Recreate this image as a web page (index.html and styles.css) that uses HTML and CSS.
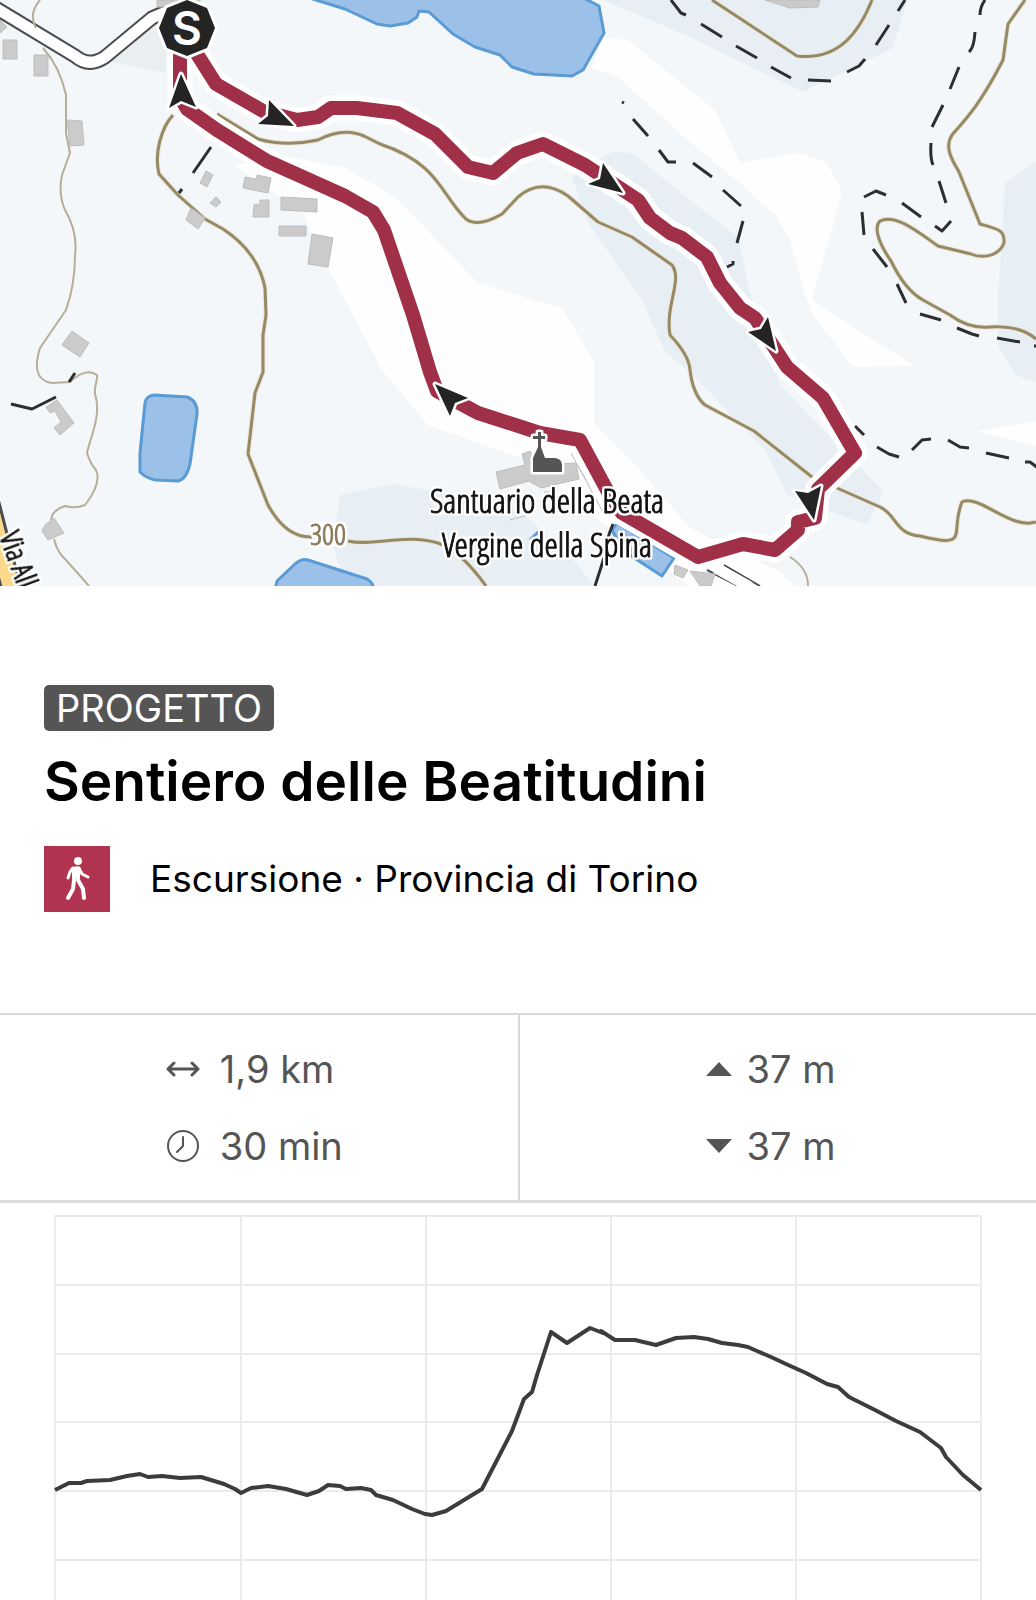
FILE: index.html
```html
<!DOCTYPE html>
<html lang="it">
<head>
<meta charset="utf-8">
<meta name="viewport" content="width=device-width, initial-scale=1">
<title>Sentiero delle Beatitudini</title>
<link rel="stylesheet" href="styles.css">
</head>
<body>
<main class="tour">
  <svg class="map" viewBox="0 0 1036 586" role="img" aria-label="Mappa del percorso">
    <!-- terrain -->
    <g class="land-white">
      <path d="M233 165 L290 157 L345 168 L395 197 L478 283 L562 308 L594 362 L594 423 L638 468 L690 528 L780 572 L795 586 L690 586 L610 530 L532 462 L428 425 L382 370 L345 300 L320 253 L303 213Z"/>
      <path d="M603 38 L628 40 L690 90 L715 110 L740 163 L800 153 L827 163 L842 192 L812 300 L873 340 L915 366 L853 367 L813 315 L805 295 L790 240 L777 217 L740 183 L690 142 L618 77 L592 68Z"/>
      <path d="M977 431 L1036 421 V446Z"/>
    </g>
    <g class="land-blue">
      <path d="M603 0 L690 37 L757 70 L803 92 L893 48 L907 0Z"/>
      <path d="M612 152 L632 153 L690 200 L738 237 L750 293 L780 385 L833 440 L884 492 L867 525 L787 495 L765 450 L690 372 L665 352 L642 300 L588 223 L572 177Z"/>
      <path d="M1036 161 L1005 183 L998 300 V345 L1015 375 L1036 382Z"/>
      <path d="M340 495 L392 484 L428 490 L518 508 L575 562 L595 586 H345 L333 545Z"/>
    </g>
    <path class="land-grey" d="M110 62 L166 73 V22 L150 20Z"/>

    <!-- water -->
    <g class="water">
      <path d="M303 -4 L345 9 L377 24 L390 26 L408 23 L417 17 L419 11 L429 12 L453 34 L475 47 L500 55 L512 67 L534 74 L572 76 L583 70 L604 33 L599 6 L580 -4Z"/>
      <path d="M154 395 L187 397 Q198 401 197 414 L190 464 Q186 480 178 481 L155 480 Q146 478 140 472 L140 453 L145 403 Q146 396 154 395Z"/>
      <path d="M275 590 L277 581 L295 564 Q302 558 308 560 L367 579 Q374 583 373 590Z"/>
      <path d="M617 523 L612 530 L622 550 L662 576 L674 558Z"/>
      <path d="M530 540 L538 532"/>
    </g>

    <!-- roads and tracks -->
    <path class="road-edge" d="M-6 7 L75 56 Q89 68 105 57 L152 18 L175 8"/>
    <path class="road-fill" d="M-6 7 L75 56 Q89 68 105 57 L152 18 L175 8"/>
    <path class="main-edge" d="M-14 490 L12 592"/>
    <path class="main-fill" d="M-14 490 L12 592"/>
    <path class="line" d="M707 570 L738 586 M724 565 L760 586"/>
    <path class="road-fill" d="M716 568 L750 587"/>

    <!-- contour lines -->
    <g class="halo">
      <path d="M173 115 C161 128 154 154 159 174 L178 195 L205 219 L223 229 Q258 252 265 288 L266 315 L263 335 L263 372 L255 393 L248 454 L268 505 Q286 538 312 537"/>
      <path d="M217 114 L258 139 Q286 147 318 140 Q343 127 364 136 L380 144 C440 164 440 194 466 219 Q478 228 502 214 L518 197 Q541 177 568 196 L598 222 L632 237 L672 265 C683 280 665 305 670 335 Q689 355 690 370 Q693 395 705 405 L754 431 L812 477 L880 507 C897 515 895 534 920 536 C972 549 949 533 962 502 C980 494 1010 530 1036 522"/>
      <path d="M712 0 L797 56 C840 61 860 30 872 0"/>
      <path d="M1025 0 L1008 24 L1003 60 C980 105 965 120 952 135 C944 147 952 160 959 172 L980 224 C998 229 1005 230 1004 243 C998 258 980 258 971 254 L938 246 C918 232 895 213 880 221 C872 229 882 248 891 261 Q905 290 923 300 L950 315 Q969 329 990 327 Q1020 325 1036 339"/>
      <path d="M348 541 C372 547 405 533 438 543 Q460 550 486 586"/>
    </g>
    <g class="contour">
      <path d="M173 115 C161 128 154 154 159 174 L178 195 L205 219 L223 229 Q258 252 265 288 L266 315 L263 335 L263 372 L255 393 L248 454 L268 505 Q286 538 312 537"/>
      <path d="M217 114 L258 139 Q286 147 318 140 Q343 127 364 136 L380 144 C440 164 440 194 466 219 Q478 228 502 214 L518 197 Q541 177 568 196 L598 222 L632 237 L672 265 C683 280 665 305 670 335 Q689 355 690 370 Q693 395 705 405 L754 431 L812 477 L880 507 C897 515 895 534 920 536 C972 549 949 533 962 502 C980 494 1010 530 1036 522"/>
      <path d="M712 0 L797 56 C840 61 860 30 872 0"/>
      <path d="M1025 0 L1008 24 L1003 60 C980 105 965 120 952 135 C944 147 952 160 959 172 L980 224 C998 229 1005 230 1004 243 C998 258 980 258 971 254 L938 246 C918 232 895 213 880 221 C872 229 882 248 891 261 Q905 290 923 300 L950 315 Q969 329 990 327 Q1020 325 1036 339"/>
      <path d="M348 541 C372 547 405 533 438 543 Q460 550 486 586"/>
    </g>
    <path class="contour-thin" d="M40 0 Q28 14 36 28 M43 48 Q60 67 66 95 L66 133 L70 153 L62 175 Q58 194 65 210 Q78 232 75 255 Q75 285 66 310 L40 348 Q30 380 52 383 L70 382 Q86 367 97 375 C98 380 94 385 95 394 C102 415 90 438 87 453 Q90 463 96 470 Q102 483 85 505 Q75 509 65 506 Q52 510 51 520 M54 539 Q57 552 66 560 L89 586 M790 557 Q808 568 808 586"/>

    <!-- buildings -->
    <g class="building">
      <path d="M3 40 H17 V59 H3Z M34 55 H48 V76 H34Z M0 20 L7 27 L0 33Z M157 0 H200 V7 H157Z"/>
      <path d="M67 120 L82 121 L84 145 L70 146Z M206 171 L213 175 L207 187 L200 183Z M216 197 L221 202 L216 207 L210 203Z M245 177 L256 179 L257 175 L271 178 L268 193 L243 188Z M254 205 L260 204 L260 200 H269 V217 H253Z"/>
      <path d="M281 197 L317 199 V212 L281 210Z M279 226 H306 V236 H279Z M312 234 L333 238 L328 267 L308 264Z M191 208 L205 218 L198 229 L186 220Z"/>
      <path d="M72 331 L89 343 L80 357 L62 345Z M46 407 L57 400 L74 423 L60 435 L54 428 L61 422 L55 411 L50 413Z M42 531 L45 525 L54 518 L64 533 L48 540Z"/>
      <path d="M765 0 L790 8 L818 7 L820 0Z M690 571 L715 574 L711 586 H700Z M675 565 L688 570 L683 578 L674 574Z"/>
      <path d="M522 454 L530 451 L540 465 L576 463 L579 479 L541 488 L529 481 L500 489 L496 472 L525 465Z M512 500 V514 M544 492 H551 M510 520 L525 516"/>
    </g>
    <path class="fence" d="M571 453 L604 514 M578 466 L586 480"/>

    <!-- paths -->
    <path class="path" d="M211 147 L193 173 M182 189 L179 193 M11 404 L32 409 L56 397 M69 382 L75 373"/>
    <path class="path" d="M613 524 Q606 540 604 558 L595 586"/>
    <path class="path" d="M671 0 L681 13 L686 15 M701 24 L722 37 M736 46 L757 58 M771 67 L791 78 M808 80 L831 81 M847 72 L859 66 L865 59 M876 45 L889 25 M898 11 L905 0"/>
    <path class="path" d="M622 102 L624 103 M633 119 L648 136 M659 150 L668 162 L676 162 M693 163 L712 177 M723 190 L741 206 M743 221 L737 243 M733 261 L733 264 L727 267"/>
    <path class="path" d="M985 0 Q980 7 980 15 M975 32 Q974 48 969 52 M959 67 L950 89 M943 105 L932 127 M931 143 Q930 158 933 165 M939 181 L946 203 M951 221 L942 231 L935 226 M921 217 L902 203 M886 195 L876 191 L864 197 M862 212 L864 235 M873 249 L887 267 M897 284 L906 303 M920 314 L941 320 M957 328 L972 334 L979 336 M997 338 L1020 342 M1034 346 H1036"/>
    <path class="path" d="M855 426 L864 435 M877 447 L889 454 L899 457 M912 450 L922 440 L931 439 M948 440 L960 447 L969 448 M986 453 L1009 458 M1025 462 L1030 462 L1038 468"/>

    <!-- route -->
    <path class="route-case" d="M197 54 L216 84 L263 111 L297 120 L318 117 L331 108 L357 108 L397 113 L435 134 L468 167 L493 173 L517 153 L543 144 L585 165 L638 200 L650 218 L670 233 L682 238 L707 257 L720 283 L740 308 L755 318 L787 367 L823 398 L855 453 L818 489 L815 518 L798 522 L798 530 L775 550 L743 544 L698 557 L622 513 L608 492 L580 440 L540 433 L478 413 L437 391 L430 372 L413 315 L384 230 L373 212 L345 196 L267 161 L217 130 L187 109 L180 97 V54"/>
    <path class="route" d="M197 54 L216 84 L263 111 L297 120 L318 117 L331 108 L357 108 L397 113 L435 134 L468 167 L493 173 L517 153 L543 144 L585 165 L638 200 L650 218 L670 233 L682 238 L707 257 L720 283 L740 308 L755 318 L787 367 L823 398 L855 453 L818 489 L815 518 L798 522 L798 530 L775 550 L743 544 L698 557 L622 513 L608 492 L580 440 L540 433 L478 413 L437 391 L430 372 L413 315 L384 230 L373 212 L345 196 L267 161 L217 130 L187 109 L180 97 V54"/>
    <g class="arrow">
      <path d="M181 74 L196 107 L181 101 L169 108Z"/>
      <path d="M294 126 L269 100 L268 116 L258 124Z"/>
      <path d="M623 193 L603 163 L600 179 L588 184Z"/>
      <path d="M776 351 L768 317 L761 329 L748 332Z"/>
      <path d="M814 520 L821 486 L808 493 L795 491Z"/>
      <path d="M435 384 L450 416 L455 403 L468 398Z"/>
    </g>
    <path class="start" d="M187 0 L207 8 L215 28 L207 48 L187 56 L167 48 L159 28 L167 8Z"/>
    <text class="start-label" x="187" y="45">S</text>

    <!-- sanctuary -->
    <path class="church" d="M538 432 H541 V436 H545 V439 H541 V447 L545 458 H555 Q562 459 562 465 V472 H533 V458 L538 447 V439 H533 V436 H538Z"/>
    <text class="place" x="547" y="513">Santuario della Beata</text>
    <text class="place" x="547" y="557">Vergine della Spina</text>
    <text class="height" x="328" y="545">300</text>
    <text class="street" transform="translate(-1 536) rotate(70)">Via All</text>
  </svg>

  <header class="summary">
    <span class="badge">PROGETTO</span>
    <h1 class="title">Sentiero delle Beatitudini</h1>
    <div class="activity">
      <svg class="activity-icon" viewBox="0 0 66 66" aria-hidden="true">
        <circle cx="34" cy="15" r="4"/>
        <path class="torso" d="M28 22 Q31 19 36 21 L36 33 H28Z"/>
        <path class="limb" d="M29 22 L26 26 L24 32 M35 22 L38 28 L44 31"/>
        <path class="leg" d="M30 34 L29 43 L24 52 M34 34 L39 43 L40 52"/>
      </svg>
      <p class="activity-text">Escursione · Provincia di Torino</p>
    </div>
  </header>

  <section class="stats" aria-label="Dati del percorso">
    <ul class="stat-group">
      <li class="stat">
        <svg class="stat-icon outline" viewBox="0 0 34 34" aria-hidden="true"><path d="M2 17 H32 M8 11 L2 17 L8 23 M26 11 L32 17 L26 23"/></svg>
        1,9 km
      </li>
      <li class="stat">
        <svg class="stat-icon outline thin" viewBox="0 0 34 34" aria-hidden="true"><circle cx="17" cy="17" r="15"/><path d="M17 8 V17 L11 23"/></svg>
        30 min
      </li>
    </ul>
    <ul class="stat-group climb">
      <li class="stat">
        <svg class="stat-icon small" viewBox="0 0 26 34" aria-hidden="true"><path d="M13 10 L26 24 H0Z"/></svg>
        37 m
      </li>
      <li class="stat">
        <svg class="stat-icon small" viewBox="0 0 26 34" aria-hidden="true"><path d="M13 24 L26 10 H0Z"/></svg>
        37 m
      </li>
    </ul>
  </section>

  <svg class="profile" viewBox="0 0 1036 397" role="img" aria-label="Profilo altimetrico">
    <path class="grid" d="M54 13 H982 M55 82 H981 M55 151 H981 M55 219 H981 M55 288 H981 M55 357 H981 M55 13 V397 M241 13 V397 M426 13 V397 M611 13 V397 M796 13 V397 M981 13 V397"/>
    <path class="elevation" d="M55 287 L69 280 L81 280 L87 278 L110 277 L127 273 L140 271 L148 274 L162 273 L180 275 L201 274 L224 281 L235 286 L241 290 L251 285 L268 283 L286 286 L307 292 L319 288 L328 282 L340 283 L346 286 L361 285 L371 287 L376 292 L393 297 L412 306 L425 311 L432 312 L446 308 L482 286 L512 228 L524 196 L532 189 L537 172 L551 129 L567 140 L590 125 L603 130 L601 128 L615 137 L635 137 L656 142 L676 135 L694 134 L708 136 L722 140 L738 142 L748 144 L757 148 L771 154 L786 161 L806 170 L827 181 L838 184 L849 194 L875 207 L896 218 L920 229 L941 245 L946 254 L963 272 L981 287"/>
  </svg>
</main>
</body>
</html>
```

FILE: styles.css
```css
* {
  box-sizing: border-box;
}

body {
  margin: 0;
  background: #fff;
  color: #000;
  font-family: Inter, "Liberation Sans", sans-serif;
  font-size: 38px;
  line-height: 46px;
}

.tour {
  overflow: hidden;
}

/* Map */
.map {
  display: block;
  width: 100%;
  height: auto;
  background: #f3f7fa;
  fill: none;
  stroke-linejoin: round;
}

.land-white { fill: #fffefe; }
.land-blue { fill: #e7eff5; }
.land-grey { fill: #e9eff1; }
.water { fill: #9cc1e8; stroke: #5a9ad5; stroke-width: 3; }
.road-edge { stroke: #4c4c50; stroke-width: 15; }
.road-fill { stroke: #fff; stroke-width: 11; }
.main-edge { stroke: #4c4c50; stroke-width: 22; }
.main-fill { stroke: #fcd98a; stroke-width: 16; }
.line { stroke: #4c4c50; stroke-width: 2; }
.halo { stroke: #ece7df; stroke-width: 5; }
.contour { stroke: #968a65; stroke-width: 3; }
.contour-thin { stroke: #b5ae98; stroke-width: 2; }
.building { fill: #cbcbcb; stroke: #bdbdbd; stroke-width: 1; }
.fence { stroke: #bdbdbd; stroke-width: 1; }
.path { stroke: #2c2e31; stroke-width: 3; }
.route-case { stroke: #fff; stroke-width: 25; }
.route { stroke: #a03048; stroke-width: 14; }
.arrow { fill: #242424; stroke: #fff; stroke-width: 5; paint-order: stroke; }
.start { fill: #242424; stroke: #fff; stroke-width: 6; paint-order: stroke; }
.start-label { fill: #fff; font-size: 46px; font-weight: 600; text-anchor: middle; }
.church { fill: #555; stroke: #fff; stroke-width: 5; paint-order: stroke; }

/* Map labels: slightly thickened letters on a white halo */
.place,
.height,
.street {
  font-family: "Open Sans Condensed Light", "Open Sans Condensed", "Noto Sans", sans-serif;
  fill: #111;
  stroke: #111;
  stroke-width: 1;
  filter:
    drop-shadow(2px 0 0 #fff)
    drop-shadow(-2px 0 0 #fff)
    drop-shadow(0 2px 0 #fff)
    drop-shadow(0 -2px 0 #fff);
}

.place { font-size: 34px; text-anchor: middle; }
.height { fill: #8b7c5c; stroke: #8b7c5c; font-size: 30px; text-anchor: middle; }
.street { font-size: 30px; }

/* Summary */
.summary {
  padding: 99px 44px 101px;
}

.badge {
  display: block;
  width: fit-content;
  padding: 0 12px;
  border-radius: 5px;
  background: #555;
  color: #fff;
}

.title {
  margin: 16px 0 31px;
  font-size: 55px;
  font-weight: 600;
  line-height: 68px;
}

.activity {
  display: flex;
  align-items: center;
  gap: 40px;
}

.activity-icon {
  flex: none;
  width: 66px;
  height: 66px;
  background: #b03350;
  fill: #fff;
}

.activity-text {
  margin: 0;
  font-size: 37px;
}

.limb,
.leg {
  fill: none;
  stroke: #fff;
  stroke-linecap: round;
  stroke-linejoin: round;
}

.limb { stroke-width: 3; }
.leg { stroke-width: 4; }

/* Stats */
.stats {
  display: grid;
  grid-template-columns: 1fr 1fr;
  border-top: 2px solid #d9d9d9;
  border-bottom: 3px solid #dcdcdc;
  color: #555;
}

.stat-group {
  display: flex;
  flex-direction: column;
  align-items: flex-start;
  gap: 31px;
  margin: 0;
  padding: 31px 0 31px 32%;
  list-style: none;
}

.climb {
  padding-left: 36%;
  border-left: 2px solid #d9d9d9;
}

.stat {
  display: flex;
  align-items: center;
  gap: 20px;
}

.climb .stat {
  gap: 14px;
}

.stat-icon {
  width: 34px;
  height: 34px;
  fill: #555;
}

.small { width: 26px; }
.outline { fill: none; stroke: #555; stroke-width: 3; stroke-linecap: round; stroke-linejoin: round; }
.thin { stroke-width: 2; }

/* Elevation profile */
.profile {
  display: block;
  width: 100%;
  height: auto;
  fill: none;
}

.grid { stroke: #ebebeb; stroke-width: 2; }
.elevation { stroke: #3c3c3c; stroke-width: 4; stroke-linejoin: round; }
```
